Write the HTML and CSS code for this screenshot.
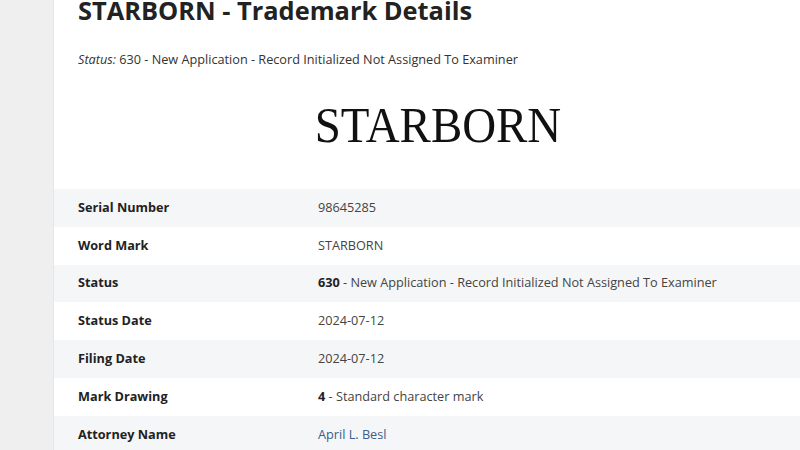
FILE: index.html
```html
<!DOCTYPE html>
<html>
<head>
<meta charset="utf-8">
<link rel="stylesheet" href="styles.css">
</head>
<body>
<div class="page">
  <aside class="side"></aside>
  <main class="content">
    <h1 class="title">STARBORN - Trademark Details</h1>
    <p class="status-line"><em>Status:</em> 630 - New Application - Record Initialized Not Assigned To Examiner</p>
    <div class="mark-image"><span>STARBORN</span></div>
    <div class="details">
      <div class="row"><div class="label">Serial Number</div><div class="value">98645285</div></div>
      <div class="row"><div class="label">Word Mark</div><div class="value">STARBORN</div></div>
      <div class="row"><div class="label">Status</div><div class="value"><b>630</b> - New Application - Record Initialized Not Assigned To Examiner</div></div>
      <div class="row"><div class="label">Status Date</div><div class="value">2024-07-12</div></div>
      <div class="row"><div class="label">Filing Date</div><div class="value">2024-07-12</div></div>
      <div class="row"><div class="label">Mark Drawing</div><div class="value"><b>4</b> - Standard character mark</div></div>
      <div class="row"><div class="label">Attorney Name</div><div class="value"><a class="link" href="#">April L. Besl</a></div></div>
    </div>
  </main>
</div>
</body>
</html>
```
FILE: styles.css
```css
html, body {
  margin: 0;
  padding: 0;
  background: #ffffff;
}
body {
  font-family: "Open Sans", "Liberation Sans", sans-serif;
  color: #222;
  overflow: hidden;
}
.page {
  display: flex;
  width: 800px;
  height: 450px;
}
.side {
  width: 53px;
  flex: none;
  background: #efefef;
  border-right: 1px solid #e6e6e6;
}
.content {
  flex: 1;
  min-width: 0;
  margin-top: -12px;
}
.title {
  margin: 0;
  padding: 0 24px;
  font-size: 25.4px;
  font-weight: 700;
  line-height: 44px;
  color: #222;
}
.status-line {
  margin: 18px 0 0;
  padding: 0 24px;
  font-size: 12.7px;
  line-height: 18px;
  color: #333;
}
.status-line em {
  font-style: italic;
}
.mark-image {
  box-sizing: border-box;
  display: flex;
  justify-content: center;
  align-items: flex-start;
  height: 121px;
  padding-top: 27px;
}
.mark-image span {
  font-family: "Liberation Serif", "Times New Roman", serif;
  font-size: 51px;
  line-height: 60px;
  color: #111;
  transform: scaleX(0.92);
  margin-left: 22px;
}
.details {
  display: flex;
  flex-direction: column;
}
.row {
  box-sizing: border-box;
  display: flex;
  align-items: center;
  height: 37.8px;
  padding-bottom: 2px;
  font-size: 12.7px;
}
.row:nth-child(odd) {
  background: #f5f6f8;
}
.label {
  width: 240px;
  padding-left: 24px;
  font-weight: 700;
  color: #222;
}
.value {
  color: #444;
}
.value b {
  color: #222;
}
.link {
  color: #3b5d8f;
  text-decoration: none;
}
```
